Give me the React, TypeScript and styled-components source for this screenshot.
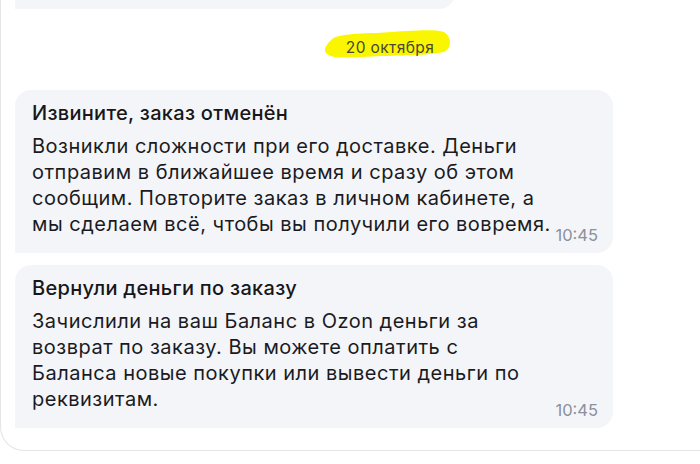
import React from "react";
import styled, { createGlobalStyle } from "styled-components";

const GlobalStyle = createGlobalStyle`
  html, body {
    margin: 0;
    padding: 0;
    background: #ffffff;
    overflow: hidden;
  }
  body {
    font-family: Inter, "Open Sans", "Noto Sans", sans-serif;
    color: #1b1b1f;
  }
`;

type Message = {
  title: string;
  lines: string[];
  time: string;
};

const messages: Message[] = [
  {
    title: "Извините, заказ отменён",
    lines: [
      "Возникли сложности при его доставке. Деньги",
      "отправим в ближайшее время и сразу об этом",
      "сообщим. Повторите заказ в личном кабинете, а",
      "мы сделаем всё, чтобы вы получили его вовремя.",
    ],
    time: "10:45",
  },
  {
    title: "Вернули деньги по заказу",
    lines: [
      "Зачислили на ваш Баланс в Ozon деньги за",
      "возврат по заказу. Вы можете оплатить с",
      "Баланса новые покупки или вывести деньги по",
      "реквизитам.",
    ],
    time: "10:45",
  },
];

const App: React.FC = () => {
  return (
    <>
      <GlobalStyle />
      <Page>
        <Card>
          <PrevBubbleClip>
            <PrevBubble />
          </PrevBubbleClip>
          <DateRow>
            <DateMark>
              <Marker viewBox="0 0 132 36" preserveAspectRatio="none" aria-hidden>
                <path
                  d="M10 14 C14 8 30 7 60 6 C90 4 112 2 122 5 C131 9 131 22 124 26 C112 30 84 30 56 31 C30 32 14 34 8 30 C1 26 4 20 10 14 Z"
                  fill="#faf600"
                />
              </Marker>
              <DateText>20 октября</DateText>
            </DateMark>
          </DateRow>
          <Feed>
            {messages.map((m, i) => (
              <Bubble key={i}>
                <Title>{m.title}</Title>
                <Body>
                  {m.lines.map((l, j) => (
                    <Line key={j}>{l}</Line>
                  ))}
                </Body>
                <Time>{m.time}</Time>
              </Bubble>
            ))}
          </Feed>
        </Card>
      </Page>
    </>
  );
};

const Page = styled.div`
  width: 700px;
  height: 464px;
  overflow: hidden;
  background: #fff;
`;

const Card = styled.div`
  width: 760px;
  box-sizing: border-box;
  border-left: 1px solid #e4e4e7;
  border-bottom: 1px solid #e4e4e7;
  border-bottom-left-radius: 24px;
  padding: 0 0 22px 14px;
`;

const PrevBubbleClip = styled.div`
  height: 9px;
  overflow: hidden;
  width: 440px;
`;

const PrevBubble = styled.div`
  height: 40px;
  margin-top: -31px;
  background: #f4f5f9;
  border-radius: 0 0 16px 0;
`;

const DateRow = styled.div`
  height: 81px;
  display: flex;
  align-items: center;
  justify-content: center;
  width: 700px;
  padding: 0 0 6px 50px;
  box-sizing: border-box;
`;

const DateMark = styled.div`
  position: relative;
  padding: 8px 20px;
`;

const Marker = styled.svg`
  position: absolute;
  left: -5px;
  top: -2px;
  width: 132px;
  height: 34px;
`;

const DateText = styled.span`
  position: relative;
  font-size: 15.5px;
  line-height: 18px;
  color: #47473a;
  letter-spacing: 0.4px;
`;

const Feed = styled.div`
  display: flex;
  flex-direction: column;
  gap: 12px;
  width: 598px;
`;

const Bubble = styled.div`
  position: relative;
  background: #f4f5f9;
  border-radius: 16px 16px 16px 0;
  padding: 10px 50px 16px 17px;
`;

const Title = styled.div`
  font-size: 20px;
  font-weight: 500;
  line-height: 26px;
  letter-spacing: 0.3px;
  color: #17171a;
`;

const Body = styled.div`
  margin-top: 7px;
  display: flex;
  flex-direction: column;
`;

const Line = styled.span`
  font-size: 20px;
  line-height: 26px;
  letter-spacing: 0.5px;
  white-space: nowrap;
  color: #1b1b1f;
`;

const Time = styled.span`
  position: absolute;
  right: 15px;
  bottom: 9px;
  font-size: 16.5px;
  line-height: 18px;
  color: #8b909a;
`;

export default App;
